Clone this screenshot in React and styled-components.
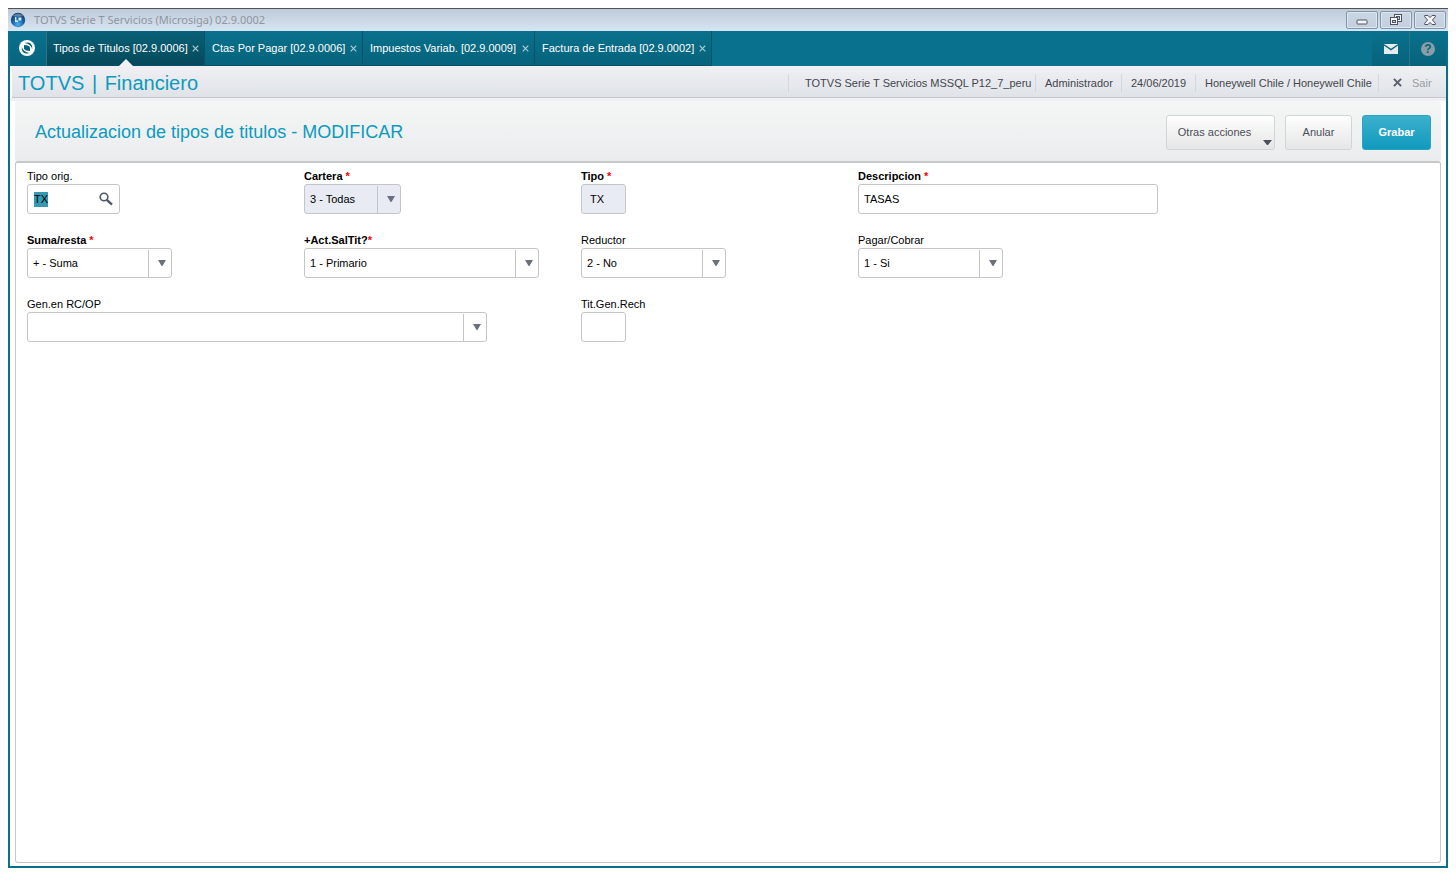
import { useEffect, useRef } from 'react';
import styled, { createGlobalStyle } from 'styled-components';

const tabs = [
    { id: 1, label: 'Tipos de Titulos [02.9.0006]', width: 158, active: true },
    { id: 2, label: 'Ctas Por Pagar [02.9.0006]', width: 158 },
    { id: 3, label: 'Impuestos Variab. [02.9.0009]', width: 172 },
    { id: 4, label: 'Factura de Entrada [02.9.0002]', width: 177 },
];

function CloseMark({ size = 7, weight = 1.2 }) {
    return (
        <svg width={size} height={size} viewBox="0 0 7 7" aria-hidden="true">
            <path d="M0.7 0.7 L6.3 6.3 M6.3 0.7 L0.7 6.3" stroke="currentColor" strokeWidth={weight} fill="none" />
        </svg>
    );
}

function SelectField({ id, label, required, tight, width, disabled, wide, options }) {
    return (
        <Field $wide={wide}>
            <Label htmlFor={id} $bold={required}>
                {label}
                {required && <Star>{tight ? '*' : ' *'}</Star>}
            </Label>
            <SelectBox $width={width}>
                <Select id={id} disabled={disabled}>
                    {options.map((option) => (
                        <option key={option}>{option}</option>
                    ))}
                </Select>
                <Arrow>
                    <svg width="8" height="6" viewBox="0 0 8 6" aria-hidden="true">
                        <path d="M0 0 H8 L4.4 6 H3.6 Z" fill="#6a7080" />
                    </svg>
                </Arrow>
            </SelectBox>
        </Field>
    );
}

export default function App() {
    const tipoRef = useRef(null);

    useEffect(() => {
        // el primer campo queda seleccionado al abrir la pantalla
        tipoRef.current.focus();
        tipoRef.current.select();
    }, []);

    return (
        <>
            <GlobalStyle />
            <Window>
                <TitleBar>
                    <svg width="16" height="16" viewBox="0 0 16 16" aria-hidden="true">
                        <defs>
                            <radialGradient id="globe" cx="50%" cy="80%" r="75%">
                                <stop offset="0" stopColor="#4cb4ee" />
                                <stop offset="0.5" stopColor="#1767ac" />
                                <stop offset="1" stopColor="#123a68" />
                            </radialGradient>
                        </defs>
                        <circle cx="8" cy="8" r="7.2" fill="url(#globe)" />
                        <path d="M2.6 4 Q8 -1 13.4 4 Q8 5.4 2.6 4 Z" fill="#8fabc8" opacity="0.6" />
                        <path d="M5 5 H6.4 V8.6 H8 V10 H5 Z M8.4 5.4 H11.4 V8.6 H8.4 Z" fill="#d4ecfa" />
                    </svg>
                    <WindowTitle>TOTVS Serie T Servicios (Microsiga) 02.9.0002</WindowTitle>
                    <WindowButtons>
                        <WindowButton aria-label="Minimizar">
                            <svg width="12" height="12" viewBox="0 0 12 12">
                                <rect x="1" y="6" width="10" height="4" rx="0.5" fill="#f5f5f5" stroke="#4f5461" />
                            </svg>
                        </WindowButton>
                        <WindowButton aria-label="Restaurar">
                            <svg width="12" height="12" viewBox="0 0 12 12">
                                <rect x="4.5" y="0.5" width="7" height="7" fill="#f5f5f5" stroke="#4f5461" />
                                <rect x="6.5" y="2.5" width="3" height="3" fill="#c9d3e0" stroke="#4f5461" />
                                <rect x="0.5" y="3.5" width="7" height="7" fill="#f5f5f5" stroke="#4f5461" />
                                <rect x="2.5" y="6.5" width="3" height="2" fill="#c9d3e0" stroke="#4f5461" />
                            </svg>
                        </WindowButton>
                        <WindowButton aria-label="Cerrar">
                            <svg width="12" height="12" viewBox="0 0 12 12">
                                <path
                                    d="M0.7 1.5 H4 L6 3.6 L8 1.5 H11.3 V2.8 L8.4 6 L11.3 9.2 V10.5 H8 L6 8.4 L4 10.5 H0.7 V9.2 L3.6 6 L0.7 2.8 Z"
                                    fill="#f5f5f5"
                                    stroke="#4f5461"
                                />
                            </svg>
                        </WindowButton>
                    </WindowButtons>
                </TitleBar>

                <Body>
                    <MenuBar>
                        <HomeButton aria-label="Inicio">
                            <svg width="18" height="18" viewBox="0 0 18 18">
                                <circle cx="9" cy="9" r="8" fill="#fff" />
                                <path d="M6.4 4.1 Q12.8 1.9 14.2 7.4 V10.6 Q13.4 5.2 6.4 4.1 Z" fill="#08637a" />
                                <path d="M11.6 13.9 Q5.2 16.1 3.8 10.6 V7.4 Q4.6 12.8 11.6 13.9 Z" fill="#08637a" />
                                <path d="M6 6 Q10.6 6 12 8.2 V12 Q7.4 12 6 9.8 Z" fill="#08637a" />
                            </svg>
                        </HomeButton>
                        {tabs.map((tab) => (
                            <Tab key={tab.id} $width={tab.width} $active={tab.active}>
                                <TabButton>{tab.label}</TabButton>
                                <TabClose aria-label={`Cerrar ${tab.label}`}>
                                    <CloseMark />
                                </TabClose>
                            </Tab>
                        ))}
                        <Tools>
                            <ToolButton aria-label="Mensajes">
                                <svg width="14" height="10" viewBox="0 0 14 10">
                                    <rect width="14" height="10" fill="#e4ecf0" />
                                    <path d="M0 0.8 L7 5.6 L14 0.8" stroke="#08637a" strokeWidth="1.3" fill="none" />
                                </svg>
                            </ToolButton>
                            <ToolButton aria-label="Ayuda">
                                <HelpMark>?</HelpMark>
                            </ToolButton>
                        </Tools>
                    </MenuBar>

                    <BrandBar>
                        <Brand>TOTVS <BrandBreak>|</BrandBreak> Financiero</Brand>
                        <InfoList>
                            <Info $width={247} $first>TOTVS Serie T Servicios MSSQL P12_7_peru</Info>
                            <Info $width={86}>Administrador</Info>
                            <Info $width={74}>24/06/2019</Info>
                            <Info $width={183}>Honeywell Chile / Honeywell Chile</Info>
                            <ExitItem $width={68}>
                                <ExitButton>
                                    <CloseMark size={9} weight={1.5} />
                                    <span>Sair</span>
                                </ExitButton>
                            </ExitItem>
                        </InfoList>
                    </BrandBar>

                    <Page>
                        <PageHeader>
                            <PageTitle>Actualizacion de tipos de titulos - MODIFICAR</PageTitle>
                            <Actions>
                                <ActionButton $width={109} $menu>
                                    Otras acciones
                                    <MenuArrow width="9" height="5" viewBox="0 0 9 5" aria-hidden="true">
                                        <path d="M0 0 H9 L5 5 H4 Z" fill="#4a505e" />
                                    </MenuArrow>
                                </ActionButton>
                                <ActionButton $width={67}>Anular</ActionButton>
                                <SaveButton $width={69}>Grabar</SaveButton>
                            </Actions>
                        </PageHeader>

                        <Form onSubmit={(e) => e.preventDefault()}>
                            <Field>
                                <Label htmlFor="tipoOrig">Tipo orig.</Label>
                                <SearchBox>
                                    <SearchInput id="tipoOrig" ref={tipoRef} defaultValue="TX" />
                                    <SearchButton type="button" aria-label="Buscar">
                                        <svg width="14" height="14" viewBox="0 0 14 14">
                                            <circle cx="5" cy="5" r="3.8" fill="none" stroke="#4f5768" strokeWidth="1.6" />
                                            <path d="M7.8 7.8 L13 12.6" stroke="#4f5768" strokeWidth="2.4" />
                                        </svg>
                                    </SearchButton>
                                </SearchBox>
                            </Field>
                            <SelectField id="cartera" label="Cartera" required disabled width={97} options={['3 - Todas']} />
                            <Field>
                                <Label htmlFor="tipo" $bold>Tipo<Star> *</Star></Label>
                                <Input id="tipo" $width={45} $indent disabled defaultValue="TX" />
                            </Field>
                            <Field>
                                <Label htmlFor="descripcion" $bold>Descripcion<Star> *</Star></Label>
                                <Input id="descripcion" $width={300} defaultValue="TASAS" />
                            </Field>

                            <SelectField id="suma" label="Suma/resta" required width={145} options={['+ - Suma', '- - Resta']} />
                            <SelectField id="actSal" label="+Act.SalTit?" required tight width={235} options={['1 - Primario']} />
                            <SelectField id="reductor" label="Reductor" width={145} options={['2 - No', '1 - Si']} />
                            <SelectField id="pagar" label="Pagar/Cobrar" width={145} options={['1 - Si', '2 - No']} />

                            <SelectField id="gen" label="Gen.en RC/OP" wide width={460} options={['']} />
                            <Field>
                                <Label htmlFor="rech">Tit.Gen.Rech</Label>
                                <Input id="rech" $width={45} />
                            </Field>
                        </Form>
                    </Page>
                </Body>
            </Window>
        </>
    );
}

const GlobalStyle = createGlobalStyle`
  * {
    box-sizing: border-box;
  }

  body {
    margin: 0;
    padding: 8px;
    background: #fff;
    font-family: "Liberation Sans", Arial, sans-serif;
    font-size: 11px;
    color: #000;
  }

  button, input, select {
    font: inherit;
    margin: 0;
  }

  button {
    border: 0;
    padding: 0;
    background: none;
    color: inherit;
    white-space: nowrap;
  }

  svg {
    display: block;
    flex: none;
  }
`;

const Window = styled.div`
  display: flex;
  flex-direction: column;
  min-height: calc(100vh - 16px);
  border-top: 1px solid #505356;
`;

const TitleBar = styled.header`
  display: flex;
  align-items: center;
  height: 22px;
  padding: 0 2px;
  background: linear-gradient(#bfcbd9, #d7e4f1);
`;

const WindowTitle = styled.div`
  flex: 1;
  padding-left: 8px;
  font-family: "Noto Sans", "Open Sans", sans-serif;
  font-size: 11px;
  line-height: 20px;
  color: #8f969e;
`;

const WindowButtons = styled.div`
  display: flex;
  gap: 2px;
`;

const WindowButton = styled.button`
  display: flex;
  align-items: center;
  justify-content: center;
  width: 32px;
  height: 18px;
  border: 1px solid #8593ab;
  border-radius: 2px;
  background: linear-gradient(#ccd7e4, #c3cfde);
  box-shadow: inset 0 0 0 1px #dde5ef;
`;

const Body = styled.div`
  display: flex;
  flex-direction: column;
  flex: 1;
  border: solid #08708a;
  border-width: 0 2px 2px;
`;

const MenuBar = styled.nav`
  display: flex;
  height: 35px;
  background: #09718d;
  color: #fff;
`;

const HomeButton = styled.button`
  display: flex;
  align-items: center;
  justify-content: center;
  width: 37px;
  padding: 0 2px 2px 0;
  border-right: 1px solid #2d7383;
  background: linear-gradient(#09718d, #07647d);
`;

const Tab = styled.div`
  position: relative;
  display: flex;
  align-items: center;
  justify-content: space-between;
  width: ${({ $width }) => $width}px;
  padding: 0 5px 0 ${({ $active }) => $active ? 6 : 7}px;
  border-right: 1px solid #075468;
  border-bottom: 1px solid #07506a;
  background: ${({ $active }) => $active ? 'linear-gradient(#086178, #06495a)' : 'linear-gradient(#09718d, #07637b)'};

  &::after {
    content: "";
    display: ${({ $active }) => $active ? 'block' : 'none'};
    position: absolute;
    left: 50%;
    bottom: -1px;
    margin-left: -7px;
    border: solid transparent;
    border-width: 0 7px 7px;
    border-bottom-color: #f0f1f4;
  }
`;

const TabButton = styled.button`
  height: 34px;
  text-align: left;
`;

const TabClose = styled.button`
  color: #a9ccd6;
`;

const Tools = styled.div`
  display: flex;
  margin-left: auto;
`;

const ToolButton = styled.button`
  display: flex;
  align-items: center;
  justify-content: center;
  width: 37px;
  background: linear-gradient(#09718d, #07637b);

  & + & {
    border-left: 1px solid #2d7383;
  }
`;

const HelpMark = styled.span`
  width: 14px;
  height: 14px;
  border-radius: 50%;
  background: #8a9ea8;
  color: #07637b;
  font-size: 12px;
  line-height: 14px;
  font-weight: bold;
`;

const BrandBar = styled.div`
  display: flex;
  align-items: center;
  justify-content: space-between;
  height: 32px;
  margin-left: 2px;
  padding-left: 6px;
  border-bottom: 1px solid #c3c7cd;
  background: linear-gradient(#f0f0f4, #dfe3e8);
`;

const Brand = styled.div`
  padding-top: 2px;
  font-size: 20px;
  line-height: 24px;
  color: #0c9abe;
`;

const BrandBreak = styled.span`
  margin: 0 2px;
`;

const InfoList = styled.ul`
  display: flex;
  margin: 0;
  padding: 2px 0 0;
  list-style: none;
  line-height: 18px;
  white-space: nowrap;
  color: #44464a;
`;

const Info = styled.li`
  width: ${({ $width }) => $width}px;
  padding-left: ${({ $first }) => $first ? 16 : 9}px;
  border-left: 1px solid #d5d8db;
`;

const ExitItem = styled(Info)`
  padding-left: 14px;
`;

const ExitButton = styled.button`
  display: flex;
  align-items: center;
  gap: 10px;
  color: #9a9ca6;

  svg {
    color: #5a5e6c;
  }
`;

const Page = styled.main`
  display: flex;
  flex-direction: column;
  flex: 1;
  padding: 0 5px 3px;
  border-top: 3px solid #f0f0f2;
`;

const PageHeader = styled.div`
  display: flex;
  align-items: center;
  justify-content: space-between;
  height: 60px;
  padding: 3px 10px 0 20px;
  border-radius: 4px 4px 0 0;
  background: linear-gradient(#f4f6f5, #ebecee);
`;

const PageTitle = styled.h1`
  margin: 0;
  padding-bottom: 2px;
  font-size: 18px;
  line-height: 24px;
  font-weight: normal;
  color: #0c9abe;
`;

const Actions = styled.div`
  display: flex;
  gap: 10px;
`;

const ActionButton = styled.button`
  position: relative;
  width: ${({ $width }) => $width}px;
  height: 35px;
  padding: 0 ${({ $menu }) => $menu ? 12 : 0}px 2px 0;
  border: 1px solid #d3d4d6;
  border-radius: 3px;
  background: linear-gradient(#fefefe, #e6e6e6);
  color: #4b4e58;
`;

const SaveButton = styled(ActionButton)`
  border-color: #2ba3c2;
  background: linear-gradient(#3cb0cd, #109abe);
  color: #fff;
  font-weight: bold;
`;

const MenuArrow = styled.svg`
  position: absolute;
  right: 2px;
  bottom: 4px;
`;

const Form = styled.form`
  display: grid;
  grid-template-columns: repeat(3, minmax(0, 277px)) 1fr;
  align-content: start;
  row-gap: 18px;
  flex: 1;
  padding: 5px 11px;
  border: 1px solid #c4c6c8;
  border-top: 2px solid #c6c7c9;
  border-radius: 3px;
`;

const Field = styled.div`
  grid-column: span ${({ $wide }) => $wide ? 2 : 1};
`;

const Label = styled.label`
  display: block;
  line-height: 16px;
  font-weight: ${({ $bold }) => $bold ? 'bold' : 'normal'};
`;

const Star = styled.span`
  color: #f00;
`;

const Input = styled.input`
  display: block;
  width: ${({ $width }) => $width}px;
  max-width: 100%;
  height: 30px;
  padding: 0 ${({ $indent }) => $indent ? 8 : 5}px;
  border: 1px solid #c3c5c7;
  border-radius: 3px;
  background: #fff;
  color: #000;
  outline: 0;

  &:disabled {
    background: #e8ebf3;
  }
`;

const SearchBox = styled.div`
  display: flex;
  align-items: center;
  width: 93px;
  height: 30px;
  padding: 0 6px;
  border: 1px solid #c3c5c7;
  border-radius: 3px;
`;

const SearchInput = styled.input`
  flex: 1;
  min-width: 0;
  padding: 0;
  border: 0;
  outline: 0;
  line-height: 15px;

  &::selection {
    background: #3499b3;
    color: #000;
  }
`;

const SearchButton = styled.button`
  padding: 0 0 1px;
`;

const SelectBox = styled.div`
  position: relative;
  width: ${({ $width }) => $width}px;
  max-width: 100%;
`;

const Select = styled.select`
  display: block;
  width: 100%;
  height: 30px;
  padding: 0 24px 0 5px;
  border: 1px solid #c3c5c7;
  border-radius: 3px;
  background: #fff;
  color: #000;
  appearance: none;
  outline: 0;

  &:disabled {
    background: #e8ebf3;
    opacity: 1;
  }
`;

const Arrow = styled.span`
  position: absolute;
  top: 2px;
  right: 1px;
  bottom: 1px;
  display: flex;
  align-items: center;
  justify-content: center;
  width: 23px;
  padding: 0 0 2px 4px;
  border-left: 1px solid #c3c5c7;
  pointer-events: none;
`;
